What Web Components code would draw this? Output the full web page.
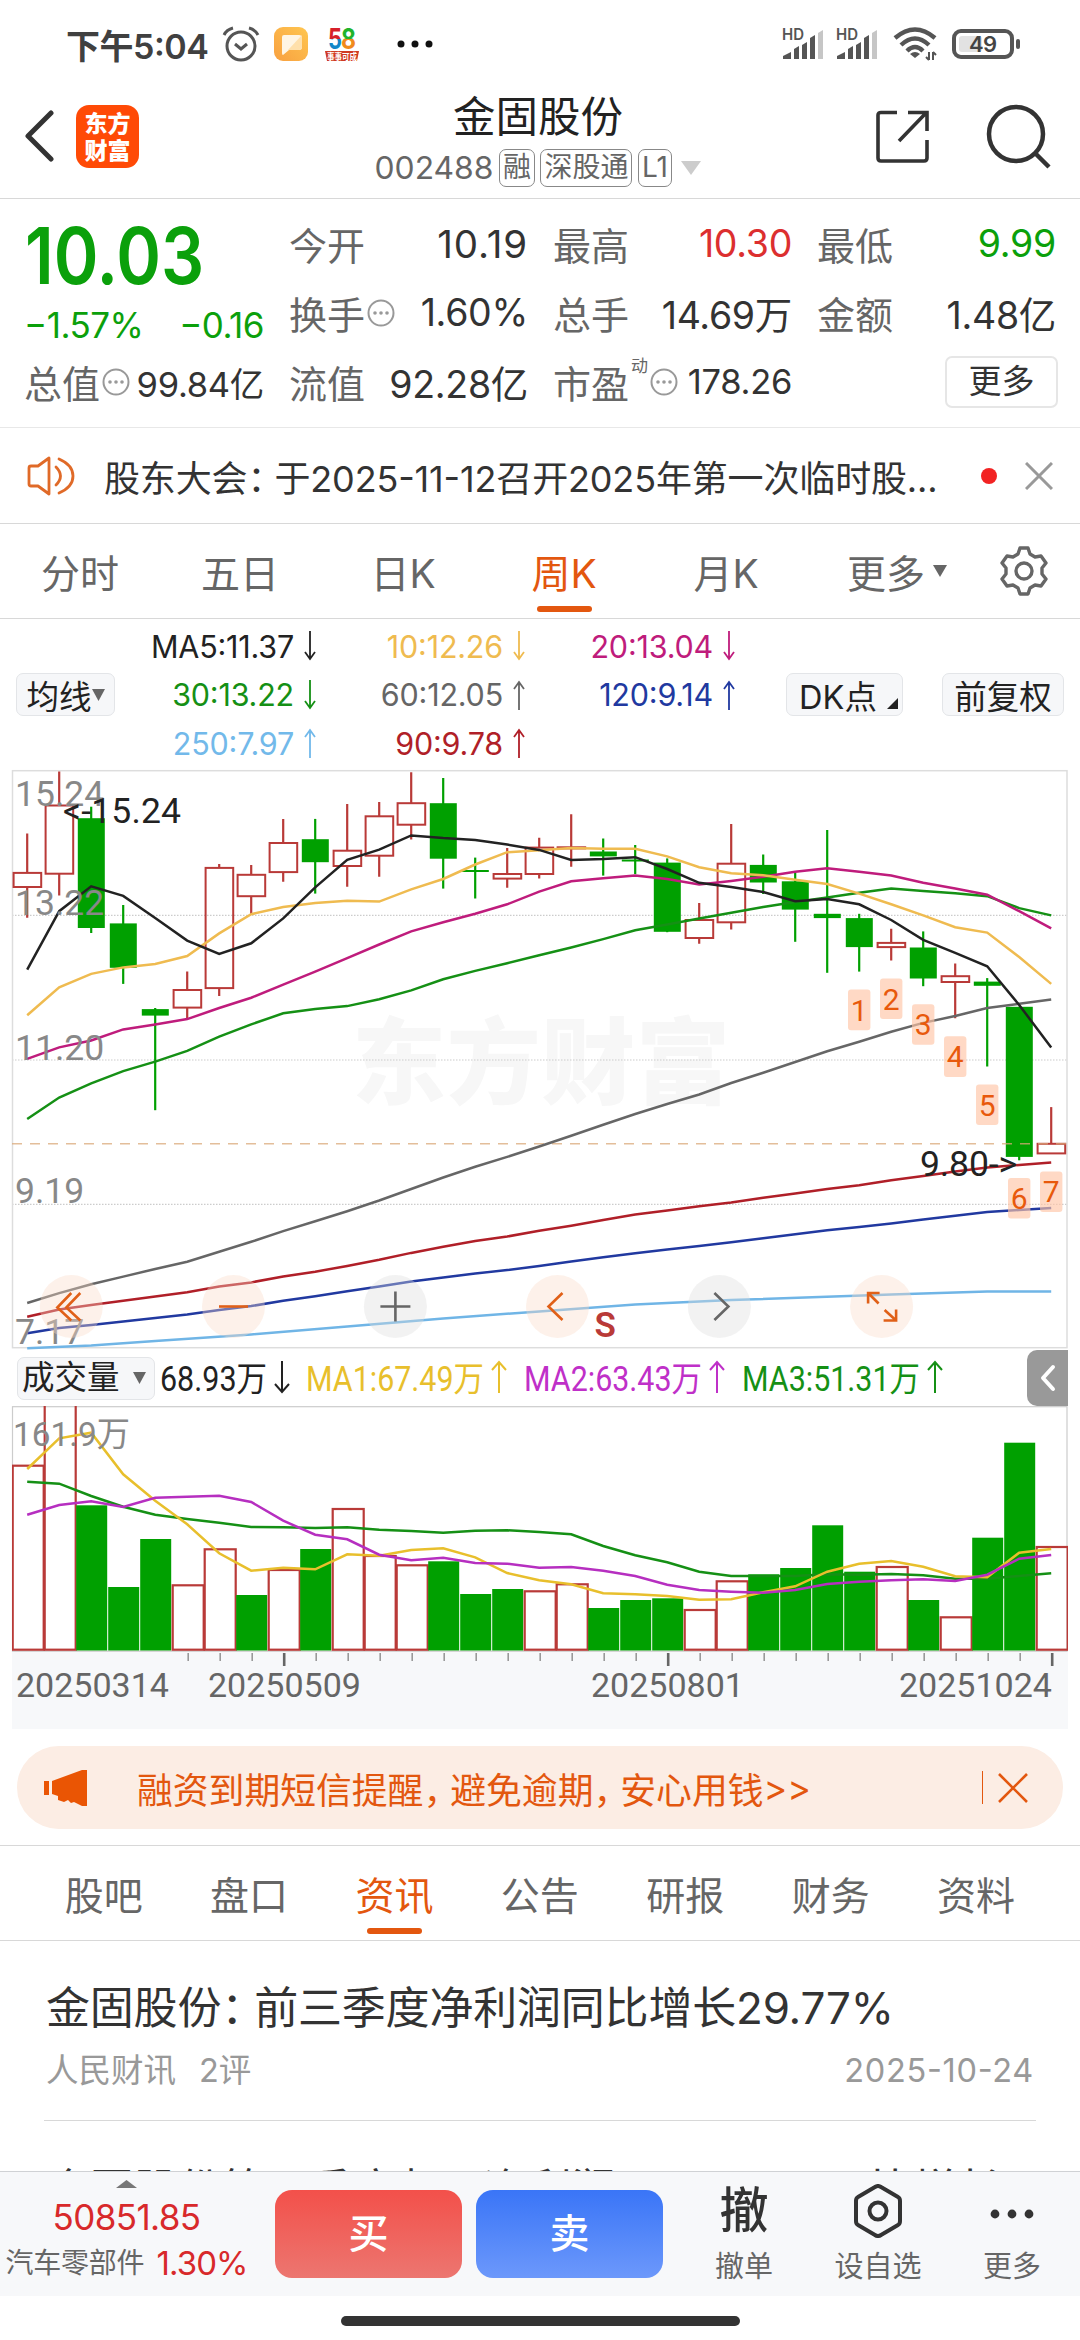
<!DOCTYPE html>
<html lang="zh-CN">
<head>
<meta charset="UTF-8">
<title>金固股份 002488</title>
<style>
  body {
    margin: 0;
    background: #fff;
  }
</style>
</head>
<body>
<stock-app></stock-app>

<script>
// Every component renders its own template into an open shadow root
class BaseElement extends HTMLElement {
  constructor() {
    super();
    this.attachShadow({ mode: 'open' });
  }

  connectedCallback() {
    this.shadowRoot.innerHTML = this.template();
  }
}

class StatusBar extends BaseElement {
  signal() {
    return `
      <svg width="42" height="32" viewBox="0 0 42 32">
        <text x="0" y="12" font-size="15.5" font-weight="600" fill="#555" textLength="22" lengthAdjust="spacingAndGlyphs">HD</text>
        <g fill="#555">
          <path d="M1 31v-3l8-4v7z"/>
          <path d="M12 31V21l5-3v13z"/>
          <path d="M20 31V17l5-3v17z"/>
          <path d="M28 31V10l5-3v24z"/>
        </g>
        <path d="M36 31V5l5-3v29z" fill="#c6c6c6"/>
      </svg>`;
  }

  template() {
    return `
      <style>
        :host {
          display: flex;
          align-items: center;
          height: 88px;
          padding: 0 58px 0 66px;
          box-sizing: border-box;
        }
        .time {
          font-size: 34px;
          font-weight: 600;
          color: #404040;
          width: 156px;
          white-space: nowrap;
          letter-spacing: -0.5px;
        }
        svg {
          display: block;
          flex: none;
        }
        .gap {
          flex: 1;
        }
      </style>
      <span class="time">下午5:04</span>
      <svg width="38" height="36" viewBox="0 0 38 36" fill="none" stroke="#555" stroke-width="3">
        <circle cx="19" cy="20" r="14"/>
        <path d="M2 9C4 5 7 3 11 2M36 9C34 5 31 3 27 2M13 18l6 5 6-5"/>
      </svg>
      <svg style="margin-left:13px" width="36" height="36" viewBox="0 0 36 36">
        <defs><linearGradient id="o" x1="0" y1="1" x2="1" y2="0"><stop offset="0" stop-color="#f8a040"/><stop offset="1" stop-color="#ffc650"/></linearGradient></defs>
        <rect x="1" y="1" width="34" height="34" rx="9" fill="url(#o)"/>
        <path d="M11 9h15q3 0 3 3v9q0 3-3 3H16l-6 5q-1 0-1-2V11q0-2 2-2z" fill="#fff5e3"/>
        <path d="M29 9L15 24h11q3 0 3-3z" fill="#ffe0ab"/>
      </svg>
      <svg style="margin-left:14px" width="38" height="38" viewBox="0 0 38 38">
        <defs>
          <linearGradient id="five" x1="0" y1="0" x2="0" y2="1"><stop offset="0.5" stop-color="#d6202a"/><stop offset="0.5" stop-color="#1487c8"/></linearGradient>
          <linearGradient id="eight" x1="0" y1="0" x2="0" y2="1"><stop offset="0.5" stop-color="#22b32b"/><stop offset="0.5" stop-color="#f08a1d"/></linearGradient>
        </defs>
        <g font-size="29" font-weight="700">
          <text x="5" y="24" fill="url(#five)" textLength="14" lengthAdjust="spacingAndGlyphs">5</text>
          <text x="18" y="24" fill="url(#eight)" textLength="15" lengthAdjust="spacingAndGlyphs">8</text>
        </g>
        <path d="M2 26h34l-2 10H4z" fill="#cf3a22"/>
        <text x="4" y="35" font-size="9" font-weight="700" fill="#fff" textLength="30" lengthAdjust="spacingAndGlyphs">事事可成</text>
      </svg>
      <svg style="margin-left:35px" width="38" height="10" viewBox="0 0 38 10" fill="#111">
        <circle cx="5" cy="5" r="3.5"/><circle cx="19" cy="5" r="3.5"/><circle cx="33" cy="5" r="3.5"/>
      </svg>
      <div class="gap"></div>
      ${this.signal()}
      <div style="width:12px"></div>
      ${this.signal()}
      <svg style="margin-left:15px" width="44" height="36" viewBox="0 0 44 36" fill="none" stroke="#555" stroke-width="4.4">
        <path d="M2 12Q22-5 42 12M8 19Q22 6 36 19M14 25Q22 17 30 25"/>
        <path d="M22 32l-5-4q5-4 10 0z" fill="#555" stroke="none"/>
        <path d="M36 26v8M40 26v8M33 31l3 3M43 29l-3-3" stroke-width="2"/>
      </svg>
      <svg style="margin-left:15px" width="70" height="32" viewBox="0 0 70 32">
        <rect x="2" y="3" width="58" height="26" rx="7" fill="#fff" stroke="#555" stroke-width="4"/>
        <rect x="7" y="8" width="23" height="16" rx="3" fill="#e2e2e2"/>
        <rect x="64" y="11" width="4" height="10" rx="2" fill="#555"/>
        <text x="31" y="24" font-size="22" font-weight="600" fill="#444" text-anchor="middle" textLength="28">49</text>
      </svg>
    `;
  }
}

class TitleBar extends BaseElement {
  template() {
    return `
      <style>
        :host {
          display: grid;
          grid-template-columns: 1fr auto 1fr;
          height: 111px;
          padding: 0 28px 0 24px;
          box-sizing: border-box;
          border-bottom: 1.5px solid #d8d8d8;
        }
        .left, .right {
          display: flex;
          align-items: center;
          padding-bottom: 14px;
        }
        .right {
          justify-content: flex-end;
          gap: 57px;
        }
        .logo {
          display: grid;
          align-content: center;
          justify-content: center;
          margin-left: 20px;
          width: 63px;
          height: 63px;
          border-radius: 13px;
          background: #ff4a06;
          color: #fff;
          font: 900 23px/27px "Noto Sans CJK SC", sans-serif;
        }
        h1 {
          margin: 6px 0 0;
          font-size: 42.5px;
          line-height: 46px;
          font-weight: 400;
          color: #222;
          text-align: center;
        }
        .code {
          display: flex;
          align-items: center;
          gap: 5.5px;
          margin-top: 9px;
          font-size: 31.8px;
          line-height: 38px;
          color: #666;
        }
        .tag {
          box-sizing: border-box;
          height: 38px;
          padding: 0 3px;
          border: 1.5px solid #888;
          border-radius: 7px;
          font-size: 28px;
          line-height: 35px;
        }
        .code svg {
          margin-left: 4px;
        }
      </style>
      <div class="left">
        <svg width="32" height="52" viewBox="0 0 32 52" fill="none" stroke="#333" stroke-width="5" stroke-linecap="round" stroke-linejoin="round">
          <path d="M27 3L4 26l23 23"/>
        </svg>
        <div class="logo"><span>东方</span><span>财富</span></div>
      </div>
      <div>
        <h1>金固股份</h1>
        <div class="code">
          <span>002488</span><span class="tag">融</span><span class="tag">深股通</span><span class="tag">L1</span>
          <svg width="20" height="14" viewBox="0 0 20 14"><path d="M0 0h20L10 14z" fill="#ccc"/></svg>
        </div>
      </div>
      <div class="right">
        <svg width="53" height="53" viewBox="0 0 53 53" fill="none" stroke="#333" stroke-width="3.6">
          <path d="M21 2.5H5Q2 2.5 2 5V48q0 3 3 3H48q3 0 3-3V30M32 2.5H51V21M50 3L23 31"/>
        </svg>
        <svg width="66" height="66" viewBox="0 0 66 66" fill="none" stroke="#333" stroke-width="4.5">
          <circle cx="30" cy="31" r="27"/><path d="M49 50l14 14"/>
        </svg>
      </div>
    `;
  }
}

class QuoteItem extends BaseElement {
  template() {
    const hint = this.hasAttribute('hint');
    const sup = this.getAttribute('sup');
    return `
      <style>
        :host {
          display: flex;
          align-items: center;
          color: #333;
          font-size: 38px;
          white-space: nowrap;
        }
        .label {
          color: #666;
        }
        sup {
          align-self: flex-start;
          margin: 9px 0 0 2px;
          font-size: 17px;
          line-height: 20px;
          color: #666;
        }
        svg {
          flex: none;
          margin-left: 2px;
        }
        .value {
          margin-left: auto;
          font-size: var(--value-size, 37.5px);
          color: var(--value-color, #333);
          letter-spacing: var(--value-spacing, -0.3px);
        }
      </style>
      <span class="label">${this.getAttribute('label')}</span>
      ${sup ? `<sup>${sup}</sup>` : ''}
      ${hint ? `<svg width="28" height="28" viewBox="0 0 28 28"><circle cx="14" cy="14" r="12.5" fill="none" stroke="#999" stroke-width="2"/><g fill="#999"><circle cx="8" cy="14" r="1.8"/><circle cx="14" cy="14" r="1.8"/><circle cx="20" cy="14" r="1.8"/></g></svg>` : ''}
      <span class="value"><slot></slot></span>
    `;
  }
}

class QuotePanel extends BaseElement {
  template() {
    return `
      <style>
        :host {
          display: grid;
          grid-template-columns: 240px repeat(3, 239px);
          grid-template-rows: repeat(3, 69px);
          column-gap: 25px;
          height: 229px;
          padding: 10px 24px 0;
          box-sizing: border-box;
          border-bottom: 1.5px solid #e8e8e8;
        }
        .price {
          grid-row: 1 / 3;
          padding-top: 3px;
          color: #0ba00b;
        }
        .last {
          margin-left: 1px;
          height: 88px;
          font-size: 78px;
          line-height: 88px;
          font-weight: 600;
          transform: scaleX(0.87);
          transform-origin: left;
        }
        .change {
          display: flex;
          justify-content: space-between;
          font-size: 35px;
          line-height: 50px;
          letter-spacing: -0.5px;
        }
        .up { --value-color: #dc2f2f; }
        .down { --value-color: #0ba00b; }
        .small { --value-size: 34.5px; }
        .open { --value-size: 38.5px; --value-spacing: 0.9px; }
        .more {
          justify-self: end;
          align-self: center;
          box-sizing: border-box;
          width: 113px;
          height: 52px;
          margin-right: -2px;
          border: 2px solid #e6e6e6;
          border-radius: 7px;
          font-size: 33px;
          line-height: 47px;
          text-align: center;
          color: #333;
        }
      </style>
      <div class="price">
        <div class="last">10.03</div>
        <div class="change"><span>−1.57%</span><span>−0.16</span></div>
      </div>
      <quote-item label="今开" class="open">10.19</quote-item>
      <quote-item label="最高" class="up">10.30</quote-item>
      <quote-item label="最低" class="down">9.99</quote-item>
      <quote-item label="换手" hint>1.60%</quote-item>
      <quote-item label="总手">14.69万</quote-item>
      <quote-item label="金额">1.48亿</quote-item>
      <quote-item label="总值" hint class="small">99.84亿</quote-item>
      <quote-item label="流值">92.28亿</quote-item>
      <quote-item label="市盈" sup="动" hint class="small">178.26</quote-item>
      <div class="more">更多</div>
    `;
  }
}

class NoticeBar extends BaseElement {
  template() {
    return `
      <style>
        :host {
          display: flex;
          align-items: center;
          height: 96px;
          padding: 0 27px;
          box-sizing: border-box;
          border-bottom: 1.5px solid #d8d8d8;
          font-size: 36px;
          color: #333;
        }
        .text {
          margin-left: 29px;
          flex: 1;
          white-space: nowrap;
          letter-spacing: -0.15px;
        }
        .dot {
          width: 16px;
          height: 16px;
          margin-right: 28px;
          border-radius: 50%;
          background: #f22323;
        }
      </style>
      <svg width="48" height="40" viewBox="0 0 48 40" fill="none" stroke="#e06a28" stroke-width="2.8" stroke-linejoin="round">
        <path d="M2 12q0-2 2-2h7L22 2v36L11 30H4q-2 0-2-2zM29 11q9 9 0 18M32 3q14 6 14 17T32 37" stroke-linecap="round"/>
      </svg>
      <span class="text"><slot></slot></span>
      <span class="dot"></span>
      <svg width="28" height="28" viewBox="0 0 28 28" stroke="#999" stroke-width="3"><path d="M1 1l26 26M27 1L1 27"/></svg>
    `;
  }
}

class TabItem extends BaseElement {
  template() {
    return `
      <style>
        :host {
          display: flex;
          justify-content: center;
          align-items: center;
          position: relative;
          height: 100%;
          font-size: 39px;
          color: #666;
        }
        :host([active]) {
          color: #e3570f;
        }
        :host([active])::after {
          content: "";
          position: absolute;
          bottom: 6px;
          left: calc(50% - 27.5px);
          width: 55px;
          height: 6px;
          border-radius: 3px;
          background: #e3570f;
        }
      </style>
      <slot></slot>
    `;
  }
}

class PeriodTabs extends BaseElement {
  template() {
    return `
      <style>
        :host {
          display: grid;
          grid-template-columns: 160px 160px 160px 168px 156px 186px 1fr;
          align-items: center;
          height: 95px;
          box-sizing: border-box;
          border-bottom: 1.5px solid #d8d8d8;
        }
        .tri {
          margin: 0 0 0 8px;
        }
        .gear {
          justify-self: center;
          margin-right: 23px;
        }
      </style>
      <tab-item>分时</tab-item>
      <tab-item>五日</tab-item>
      <tab-item style="margin-left:6px">日K</tab-item>
      <tab-item active>周K</tab-item>
      <tab-item>月K</tab-item>
      <tab-item>更多<svg class="tri" width="14" height="12" viewBox="0 0 14 12"><path d="M0 0h14L7 12z" fill="#666"/></svg></tab-item>
      <svg class="gear" width="50" height="50" viewBox="0 0 50 50" fill="none" stroke="#666" stroke-width="3.4" stroke-linejoin="round">
        <path d="M21 2h8l2 6 5 3 6-1 5 7-4 5v6l4 5-5 7-6-1-5 3-2 6h-8l-2-6-5-3-6 1-5-7 4-5v-6l-4-5 5-7 6 1 5-3z"/>
        <circle cx="25" cy="25" r="8"/>
      </svg>
    `;
  }
}

class MaValue extends BaseElement {
  template() {
    const arrow = this.getAttribute('dir') === 'up'
      ? 'M6 30V2M1 9l5-7 5 7'
      : 'M6 0v28M1 21l5 7 5-7';
    return `
      <style>
        :host {
          display: flex;
          justify-content: flex-end;
          align-items: center;
          gap: 10px;
          font-size: 30.5px;
          letter-spacing: -0.2px;
        }
      </style>
      <span><slot></slot></span>
      <svg width="12" height="30" viewBox="0 0 12 30" fill="none" stroke="currentColor" stroke-width="1.8"><path d="${arrow}"/></svg>
    `;
  }
}

class MaLegend extends BaseElement {
  template() {
    return `
      <style>
        :host {
          display: flex;
          align-items: center;
          height: 151px;
          padding-left: 16px;
          box-sizing: border-box;
        }
        .values {
          display: grid;
          grid-template-columns: 201px 209px 210px;
          grid-template-rows: repeat(3, 48.5px);
        }
        .btn {
          display: flex;
          align-items: center;
          justify-content: center;
          box-sizing: border-box;
          height: 43px;
          border: 1.5px solid #e3e5e8;
          border-radius: 7px;
          background: #f6f7f9;
          font-size: 32.5px;
          color: #222;
          white-space: nowrap;
        }
      </style>
      <div class="btn" style="width:99px">均线<svg width="13" height="12" viewBox="0 0 13 12"><path d="M0 0h13L6.5 12z" fill="#666"/></svg></div>
      <div class="values">
        <ma-value dir="down" style="color:#222">MA5:11.37</ma-value>
        <ma-value dir="down" style="color:#efbb50">10:12.26</ma-value>
        <ma-value dir="down" style="color:#bf1c7c">20:13.04</ma-value>
        <ma-value dir="down" style="color:#159015">30:13.22</ma-value>
        <ma-value dir="up" style="color:#666">60:12.05</ma-value>
        <ma-value dir="up" style="color:#2139a0">120:9.14</ma-value>
        <ma-value dir="up" style="color:#72b9ea">250:7.97</ma-value>
        <ma-value dir="up" style="color:#b01f28">90:9.78</ma-value>
      </div>
      <div class="btn" style="width:117px;margin-left:51px;padding-left:8px">DK点<svg style="margin:18px 0 0 10px" width="11" height="11" viewBox="0 0 11 11"><path d="M11 0v11H0z" fill="#222"/></svg></div>
      <div class="btn" style="width:122px;margin-left:39px">前复权</div>
    `;
  }
}

// Shared helpers of the two charts: 33 weeks, one every 32px
const STEP = 32;
const FIRST_X = 27.2;
const RED = '#b93a38';
const GREEN = '#00a000';
const weekX = i => FIRST_X + STEP * i;

function polyline(values, color) {
  const points = values.map((v, i) => Array.isArray(v) ? `${weekX(v[0])},${v[1]}` : `${weekX(i)},${v}`);
  return `<polyline points="${points.join(' ')}" fill="none" stroke="${color}" stroke-width="2.5"/>`;
}

class KlineChart extends BaseElement {
  // direction, high, body top, body bottom, low
  candles() {
    const data = [
      ['r', 73.5, 112.9, 127, 157.7], ['r', 11.5, 45.5, 113.7, 135.5], ['g', 46.7, 58.2, 168, 173],
      ['g', 145, 163.4, 207.8, 223.9], ['g', 248, 249.1, 255.6, 350.2], ['r', 211.6, 230, 247.6, 258.3],
      ['r', 104.1, 107.9, 228.1, 236.1], ['r', 104.9, 114.8, 136.2, 154.2], ['r', 58.9, 83, 112.1, 121.7],
      ['g', 58.9, 79.2, 102.2, 133.6], ['r', 44, 90.7, 106, 126.7], ['r', 42.1, 56.3, 95.7, 116.7],
      ['r', 12.2, 43.2, 64.7, 79.6], ['g', 18, 43.2, 98.7, 128.6], ['g', 97.6, 110, 112, 138.5],
      ['r', 88, 114, 118.6, 127.8], ['r', 77.7, 87.6, 114, 118.6], ['r', 54.3, 87.3, 88.4, 106.8],
      ['g', 78.5, 91.5, 96.4, 115.6], ['g', 85, 99.5, 101.5, 114], ['g', 98.4, 102.6, 171.8, 172.2],
      ['r', 143.1, 160, 178, 183.7], ['r', 63.9, 103.7, 162.3, 169.5], ['g', 94.5, 104.9, 122.5, 134],
      ['g', 112.9, 121.3, 149.6, 181.8], ['g', 70, 153.8, 158.1, 212.8], ['g', 153.8, 158.1, 187.1, 211.6],
      ['r', 168.8, 182.9, 187.1, 200.5], ['g', 171.4, 187.5, 218.5, 226.2], ['r', 203.6, 216.2, 222, 258.3],
      ['g', 218.1, 221.6, 225.8, 306.5], ['g', 246.8, 246.8, 396.9, 400.3], ['r', 347.1, 383.8, 393.4, 393.4]
    ];
    return data.map(([dir, high, top, bottom, low], i) => {
      const x = weekX(i);
      if (dir === 'g') {
        return `<path d="M${x} ${high}V${low}" stroke="${GREEN}" stroke-width="2.2"/>
          <rect x="${x - 13.4}" y="${top}" width="27" height="${bottom - top}" fill="${GREEN}"/>`;
      }
      return `<path d="M${x} ${high}V${top}M${x} ${bottom}V${low}" stroke="${RED}" stroke-width="2.2"/>
        <rect x="${x - 13.6}" y="${top}" width="27.6" height="${bottom - top}" fill="none" stroke="${RED}" stroke-width="2"/>`;
    }).join('');
  }

  lines() {
    return [
      polyline([[0, 588.2], [2, 585.5], [4, 580.9], [7, 574.4], [10, 566.4], [13, 558.4], [16, 551.5], [19, 544.6], [22, 540], [27, 534.6], [30, 531.6], [32, 531.6]], '#70b5e6'),
      polyline([573.3, 567.9, 564.9, 561.4, 558, 554.5, 549.9, 546.1, 540.8, 536.2, 531.2, 526.6, 521.6, 517.4, 513.6, 510.1, 505.9, 501.5, 497.3, 493.3, 489.6, 485.9, 482.2, 478.3, 474.3, 470.3, 466.9, 463.4, 459.6, 455.8, 452, 450, 448.1], '#2139a0'),
      polyline([556.8, 549.6, 545, 540.8, 536.5, 532.3, 526.6, 522.4, 516.6, 511.7, 505.9, 499.8, 492.9, 486.8, 481, 476.5, 470.7, 465.7, 460, 454.6, 450.4, 446.2, 442.4, 437.8, 433.6, 429, 425.2, 420.2, 416, 411.4, 407.6, 404.9, 402.6], '#b01f28'),
      polyline([543, 533.1, 524.3, 516.6, 509, 501.7, 491.8, 481.8, 471.1, 461.2, 451.2, 440.5, 429, 417.5, 406.8, 396.9, 386.5, 375.8, 364.7, 354, 344, 334.5, 323, 312.7, 302, 291.2, 281.7, 271.7, 262.9, 256, 248, 243.8, 239.6], '#666'),
      polyline([359, 337.5, 323.4, 311.1, 301.6, 290.9, 276.7, 264.4, 253.3, 249.1, 246.1, 239.2, 230.4, 219.3, 210.9, 203.2, 195.2, 187.5, 179.1, 170.3, 164.6, 158.4, 152.7, 147, 142, 137.4, 132.8, 128.6, 130.9, 133.2, 136.2, 148.1, 155.4], '#159015'),
      polyline([298.9, 287.4, 280.5, 269.4, 264.4, 259.1, 248, 237.7, 224.6, 211.6, 198.2, 184.5, 171.4, 162.3, 153.8, 144.3, 131.6, 121.3, 118.3, 115.6, 119, 124.4, 120.9, 116.7, 111.7, 108.3, 111.7, 115.6, 122.8, 128.6, 134.7, 151.2, 168.4], '#bf1c7c'),
      polyline([255.3, 227.3, 213.9, 207.4, 204, 196, 173.4, 154.2, 147, 143.1, 140.8, 141.6, 129.4, 119, 104.5, 92.2, 90.3, 88, 88.8, 88.8, 96.4, 107.2, 113.3, 115.2, 119.8, 124, 133.6, 144.3, 155.4, 167.2, 172.6, 197.1, 223.9], '#efbb50'),
      polyline([209.7, 151.2, 126.3, 135.9, 158, 180.6, 194, 183.3, 158.4, 127.4, 99.9, 89.6, 75.4, 78.1, 80, 84.6, 89.9, 99.9, 99.1, 97.2, 109, 122.8, 127, 132, 141.2, 138.9, 144.3, 160, 179.9, 192.9, 206.3, 245, 287.4], '#222')
    ].join('');
  }

  badges() {
    return [229.6, 218.5, 244.2, 276.3, 324.5, 417.9, 411.4].map((y, i) => `
      <rect x="${weekX(26 + i) - 11.2}" y="${y}" width="22.4" height="40.6" rx="3" fill="#ffc4a6" fill-opacity="0.65"/>
      <text x="${weekX(26 + i)}" y="${y + 31}" font-size="30" fill="#e8590c" text-anchor="middle">${i + 1}</text>
    `).join('');
  }

  controls() {
    const items = [
      [71.3, '#fbd9c8', '#e06018', 'M0-13.5L-14 1 0 14M9-13.5L-5 1 9 14'],
      [233.5, '#fbd9c8', '#e06018', 'M-14.5 0H14.5'],
      [395.4, '#ddd', '#666', 'M-15 0H15M0-15V15'],
      [557.5, '#fbd9c8', '#e06018', 'M5-13.5L-9 0 5 13.5'],
      [719.4, '#ddd', '#666', 'M-5-13.5L9 0-5 13.5'],
      [881.6, '#fbd9c8', '#e06018', 'M-13.5-3V-13.5H-2M-13-13L-3-3M14.5 3V14H2M14 13.5L3 3.5']
    ];
    return items.map(([x, bg, color, d]) => `
      <g transform="translate(${x} 546.5)">
        <circle r="31.5" fill="${bg}" fill-opacity="0.38"/>
        <path d="${d}" fill="none" stroke="${color}" stroke-width="2.6"/>
      </g>
    `).join('');
  }

  template() {
    return `
      <style>
        :host {
          display: block;
          height: 590px;
          margin-top: -10px;
        }
        svg {
          display: block;
        }
        text {
          font-family: Roboto, "Noto Sans CJK SC", sans-serif;
        }
      </style>
      <svg width="1080" height="590" viewBox="0 0 1080 590">
        <text x="352" y="337" font-size="94" font-weight="900" fill="#f7f7f7" textLength="378">东方财富</text>
        <path d="M12 155.4H1067M12 300H1067M12 444.3H1067" stroke="#ccc" stroke-width="1.2" stroke-dasharray="1.5 1.5"/>
        <rect x="12.5" y="10.7" width="1054.5" height="577" fill="none" stroke="#ddd" stroke-width="1.5"/>
        ${this.candles()}
        <path d="M12 383.8H1067" stroke="#d9a878" stroke-opacity="0.75" stroke-width="1.6" stroke-dasharray="10 8"/>
        ${this.lines()}
        <g font-size="35.5" fill="#888">
          <text x="15" y="46">15.24</text>
          <text x="15" y="154.5">13.22</text>
          <text x="15" y="299.7">11.20</text>
          <text x="15" y="443">9.19</text>
          <text x="15" y="584">7.17</text>
        </g>
        <g font-size="35.5" fill="#222">
          <text x="63" y="62.8" textLength="118">&lt;-15.24</text>
          <text x="920" y="416" textLength="97">9.80-&gt;</text>
        </g>
        ${this.controls()}
        <text x="594.5" y="577" font-size="35" font-weight="600" fill="${RED}">S</text>
        ${this.badges()}
      </svg>
    `;
  }
}

class VolumeLegend extends BaseElement {
  template() {
    const items = [
      [0, 107, '#222', '68.93万', 'down'],
      [146, 178, '#e8bf2c', 'MA1:67.49万', 'up'],
      [364, 178, '#bf30c8', 'MA2:63.43万', 'up'],
      [582, 178, '#159015', 'MA3:51.31万', 'up']
    ];
    return `
      <style>
        :host {
          display: flex;
          align-items: center;
          height: 56px;
          padding: 0 12px 0 17px;
        }
        .btn {
          display: flex;
          align-items: center;
          box-sizing: border-box;
          width: 138px;
          height: 43px;
          padding-left: 4px;
          border: 1.5px solid #e3e5e8;
          border-radius: 7px;
          background: #f6f7f9;
          font-size: 32.5px;
          line-height: 38px;
          color: #222;
        }
        .values {
          margin-left: 5px;
          flex: none;
        }
        .fold {
          display: flex;
          align-items: center;
          justify-content: center;
          width: 41px;
          height: 56px;
          margin-left: auto;
          border-radius: 10px 0 0 10px;
          background: #999;
        }
      </style>
      <div class="btn">成交量<svg style="margin-left:13px" width="13" height="12" viewBox="0 0 13 12"><path d="M0 0h13L6.5 12z" fill="#666"/></svg></div>
      <svg class="values" width="800" height="56" viewBox="0 0 800 56" font-family="Roboto, 'Noto Sans CJK SC'" font-size="34.5">
        ${items.map(([x, w, color, text, dir]) => `
          <text x="${x}" y="40.5" fill="${color}" textLength="${w}" lengthAdjust="spacingAndGlyphs">${text}</text>
          <path transform="translate(${x + w + 8} 11)" d="${dir === 'up' ? 'M7 32V1M0 9L7 1l7 8' : 'M7 0v31M0 23l7 8 7-8'}" fill="none" stroke="${color}" stroke-width="2"/>
        `).join('')}
      </svg>
      <div class="fold">
        <svg width="16" height="28" viewBox="0 0 16 28" fill="none" stroke="#fff" stroke-width="4" stroke-linecap="round" stroke-linejoin="round"><path d="M13 3L3 14l10 11"/></svg>
      </div>
    `;
  }
}

class VolumeChart extends BaseElement {
  bars() {
    const directions = 'rrgggrrgrgrrrgggrrgggrrggggrgrggr';
    const tops = [59.7, -6, 99.3, 181, 133, 179.3, 143.3, 189, 164, 143, 103, 150, 159.3, 155.3, 188, 183, 185.3, 178.3, 202, 194, 192.3, 204, 175.3, 168.3, 162, 119.3, 165.7, 161, 194, 211.3, 131.7, 36.7, 141];
    return tops.map((y, i) => {
      const x = weekX(i);
      if (directions[i] === 'g') {
        return `<rect x="${x - 15}" y="${y}" width="31" height="${244.5 - y}" fill="${GREEN}"/>`;
      }
      return `<rect x="${x - 14.5}" y="${y}" width="31" height="${243.7 - y}" fill="none" stroke="${RED}" stroke-width="2.2"/>`;
    }).join('');
  }

  ticks() {
    let d = '';
    for (let i = 5; i < 33; i++) {
      const major = i % 12 === 8;
      d += `<path d="M${weekX(i) + 1} 247v${major ? 13 : 8}" stroke="${major ? '#666' : '#999'}" stroke-width="${major ? 2.6 : 1.6}"/>`;
    }
    return d;
  }

  template() {
    return `
      <style>
        :host {
          display: block;
          height: 323px;
        }
        svg {
          display: block;
        }
        text {
          font-family: Roboto, "Noto Sans CJK SC", sans-serif;
        }
      </style>
      <svg width="1080" height="323" viewBox="0 0 1080 323">
        <clipPath id="plot"><rect x="12" y="0" width="1056" height="246"/></clipPath>
        <rect x="12" y="245" width="1056" height="78" fill="#f7f8fa"/>
        <rect x="12.5" y="0.7" width="1054.5" height="244.5" fill="none" stroke="#ccc" stroke-width="1.2"/>
        <g clip-path="url(#plot)">
          ${this.bars()}
          ${polyline([75.7, 77.7, 90, 100.7, 108.7, 113, 116.7, 121, 121.3, 122, 121.3, 123.7, 125, 126.7, 124.7, 124.3, 126, 128.3, 140, 149.3, 156.3, 165.7, 170, 170, 170, 168.3, 168.7, 168, 169.3, 172.7, 172.7, 170, 167.3], '#159015')}
          ${polyline([63, 32.3, 26.7, 68.3, 94.7, 118.3, 147.3, 164.7, 161.7, 163.3, 148.3, 149.7, 144, 142.3, 151.3, 167, 174.3, 178.3, 187.3, 188.3, 190, 193.7, 193.3, 186.3, 180.3, 165.7, 157.7, 155, 160.7, 170.3, 171.3, 146.7, 143], '#e8bf2c')}
          ${polyline([108.7, 99, 95.3, 101, 91.7, 90.7, 89.7, 96, 114.7, 128.7, 133.3, 148.7, 154.3, 151.7, 157, 157.7, 161.7, 161, 164.7, 170, 178.7, 184, 185.7, 186.7, 184, 178, 175.7, 174.3, 173.3, 175, 168.7, 152.7, 149], '#b62fc0')}
        </g>
        ${this.ticks()}
        <text x="13" y="40" font-size="34" fill="#888" textLength="117" lengthAdjust="spacingAndGlyphs">161.9万</text>
        <g font-size="34" fill="#666">
          <text x="16" y="291">20250314</text>
          <text x="208" y="291">20250509</text>
          <text x="591" y="291">20250801</text>
          <text x="899" y="291">20251024</text>
        </g>
      </svg>
    `;
  }
}

class PromoBanner extends BaseElement {
  template() {
    return `
      <style>
        :host {
          display: flex;
          align-items: center;
          height: 83px;
          margin: 17px 17px 16px;
          padding: 0 35px 0 27px;
          box-sizing: border-box;
          border-radius: 42px;
          background: #fcede4;
          color: #e3570f;
          font-size: 35.8px;
        }
        .text {
          flex: 1;
          margin-left: 50px;
          white-space: nowrap;
        }
        .line {
          width: 1.5px;
          height: 33px;
          margin-right: 15px;
          background: #e3570f;
        }
      </style>
      <svg width="43" height="36" viewBox="0 0 43 36" fill="#ea5504">
        <path d="M0 11h5v14H0zM8 11L38 0h5v36h-5l-8-4-3 1-3-3-4 2-6-2v-4l-6-2z"/>
      </svg>
      <span class="text"><slot></slot></span>
      <span class="line"></span>
      <svg width="30" height="30" viewBox="0 0 30 30" stroke="#e3570f" stroke-width="2.6"><path d="M1 1l28 28M29 1L1 29"/></svg>
    `;
  }
}

class InfoTabs extends BaseElement {
  template() {
    return `
      <style>
        :host {
          display: grid;
          grid-template-columns: repeat(7, 145.4px);
          height: 96px;
          padding: 0 31px;
          box-sizing: border-box;
          border-top: 1.5px solid #d8d8d8;
          border-bottom: 1.5px solid #d8d8d8;
        }
      </style>
      <tab-item>股吧</tab-item>
      <tab-item>盘口</tab-item>
      <tab-item active>资讯</tab-item>
      <tab-item>公告</tab-item>
      <tab-item>研报</tab-item>
      <tab-item>财务</tab-item>
      <tab-item>资料</tab-item>
    `;
  }
}

class NewsItem extends BaseElement {
  template() {
    const source = this.getAttribute('source');
    return `
      <style>
        :host {
          display: block;
          height: 180px;
          margin: 0 44px;
          padding: 36px 2px 0;
          box-sizing: border-box;
          border-bottom: 1.5px solid #d8d8d8;
        }
        .title {
          font-size: 44px;
          line-height: 62px;
          letter-spacing: -0.2px;
          color: #333;
          white-space: nowrap;
        }
        .meta {
          display: flex;
          margin-top: 10px;
          font-size: 32.5px;
          line-height: 44px;
          color: #999;
        }
        .comments {
          flex: 1;
          margin-left: 23px;
        }
        .date {
          letter-spacing: 0.7px;
        }
      </style>
      <div class="title"><slot></slot></div>
      ${source ? `<div class="meta">
        <span>${source}</span>
        <span class="comments">${this.getAttribute('comments')}</span>
        <span class="date">${this.getAttribute('date')}</span>
      </div>` : ''}
    `;
  }
}

class TradeBar extends BaseElement {
  template() {
    return `
      <style>
        :host {
          display: flex;
          height: 125px;
          box-sizing: border-box;
          border-top: 1.5px solid #d0d2d5;
          background: #f7f8fa;
          white-space: nowrap;
        }
        .index {
          width: 253px;
          display: flex;
          flex-direction: column;
          align-items: center;
          color: #d8292b;
        }
        .index svg {
          margin-top: 8px;
        }
        .points {
          font-size: 35px;
          line-height: 46px;
          margin-top: 6px;
          letter-spacing: -0.6px;
        }
        .sector {
          display: flex;
          align-items: center;
          gap: 12px;
          margin-top: 5px;
          font-size: 33px;
          line-height: 36px;
          letter-spacing: -0.9px;
        }
        .sector span {
          font-size: 28px;
          letter-spacing: -0.2px;
          color: #666;
        }
        .btn {
          width: 187px;
          height: 88px;
          margin: 18px 0 0 14px;
          border-radius: 17px;
          font-size: 40px;
          font-weight: 500;
          line-height: 88px;
          text-align: center;
          color: #fff;
        }
        .buy {
          margin-left: 22px;
          background: linear-gradient(#f3504a, #ec7670);
        }
        .sell {
          background: linear-gradient(#3a75f7, #6c98fb);
        }
        .action {
          display: flex;
          flex-direction: column;
          align-items: center;
          width: 134px;
          font-size: 29px;
          line-height: 36px;
          color: #666;
        }
        .icon {
          display: flex;
          align-items: center;
          height: 77px;
          font-size: 49px;
          line-height: 72px;
          font-weight: 500;
          color: #333;
        }
      </style>
      <div class="index">
        <svg width="21" height="8" viewBox="0 0 21 8"><path d="M10.5 0L21 8H0z" fill="#777"/></svg>
        <div class="points">50851.85</div>
        <div class="sector"><span>汽车零部件</span>1.30%</div>
      </div>
      <div class="btn buy">买</div>
      <div class="btn sell">卖</div>
      <div class="action" style="margin-left:14px"><div class="icon">撤</div>撤单</div>
      <div class="action">
        <div class="icon"><svg width="50" height="54" viewBox="0 0 50 54" fill="none" stroke="#333" stroke-width="4" stroke-linejoin="round"><path d="M22 3q3-2 6 0l17 10q2 1 2 4v20q0 3-2 4L28 51q-3 2-6 0L5 41q-2-1-2-4V17q0-3 2-4z"/><circle cx="25" cy="27" r="8.5"/></svg></div>设自选
      </div>
      <div class="action">
        <div class="icon"><svg style="margin-top:6px" width="44" height="10" viewBox="0 0 44 10" fill="#333"><circle cx="5" cy="5" r="4.4"/><circle cx="22" cy="5" r="4.4"/><circle cx="39" cy="5" r="4.4"/></svg></div>更多
      </div>
    `;
  }
}

class StockApp extends BaseElement {
  template() {
    return `
      <style>
        :host {
          display: flex;
          flex-direction: column;
          width: 1080px;
          height: 2340px;
          overflow: hidden;
          background: #fff;
          font-family: Inter, "Noto Sans CJK SC", sans-serif;
          font-feature-settings: "case" 1;
        }
        :host > * {
          flex: none;
        }
        /* full-width punctuation is set a little tighter */
        .p {
          letter-spacing: -0.25em;
        }
        .feed {
          flex: 1;
          min-height: 0;
          overflow: hidden;
        }
        .home {
          display: flex;
          justify-content: center;
          height: 44px;
          padding-top: 20px;
          box-sizing: border-box;
        }
        .home i {
          width: 399px;
          height: 10px;
          border-radius: 5px;
          background: #333;
        }
      </style>
      <status-bar></status-bar>
      <title-bar></title-bar>
      <quote-panel></quote-panel>
      <notice-bar>股东大会<span class="p">：</span>于2025-11-12召开2025年第一次临时股...</notice-bar>
      <period-tabs></period-tabs>
      <ma-legend></ma-legend>
      <kline-chart></kline-chart>
      <volume-legend></volume-legend>
      <volume-chart></volume-chart>
      <promo-banner>融资到期短信提醒<span class="p">，</span>避免逾期<span class="p">，</span>安心用钱&gt;&gt;</promo-banner>
      <info-tabs></info-tabs>
      <div class="feed">
        <news-item source="人民财讯" comments="2评" date="2025-10-24">金固股份<span class="p">：</span>前三季度净利润同比增长29.77%</news-item>
        <news-item style="margin-top:2px">金固股份第三季度归母净利润5114万元<span class="p">，</span>同比增长</news-item>
      </div>
      <trade-bar></trade-bar>
      <div class="home"><i></i></div>
    `;
  }
}

customElements.define('status-bar', StatusBar);
customElements.define('title-bar', TitleBar);
customElements.define('quote-item', QuoteItem);
customElements.define('quote-panel', QuotePanel);
customElements.define('notice-bar', NoticeBar);
customElements.define('tab-item', TabItem);
customElements.define('period-tabs', PeriodTabs);
customElements.define('ma-value', MaValue);
customElements.define('ma-legend', MaLegend);
customElements.define('kline-chart', KlineChart);
customElements.define('volume-legend', VolumeLegend);
customElements.define('volume-chart', VolumeChart);
customElements.define('promo-banner', PromoBanner);
customElements.define('info-tabs', InfoTabs);
customElements.define('news-item', NewsItem);
customElements.define('trade-bar', TradeBar);
customElements.define('stock-app', StockApp);
</script>
</body>
</html>
